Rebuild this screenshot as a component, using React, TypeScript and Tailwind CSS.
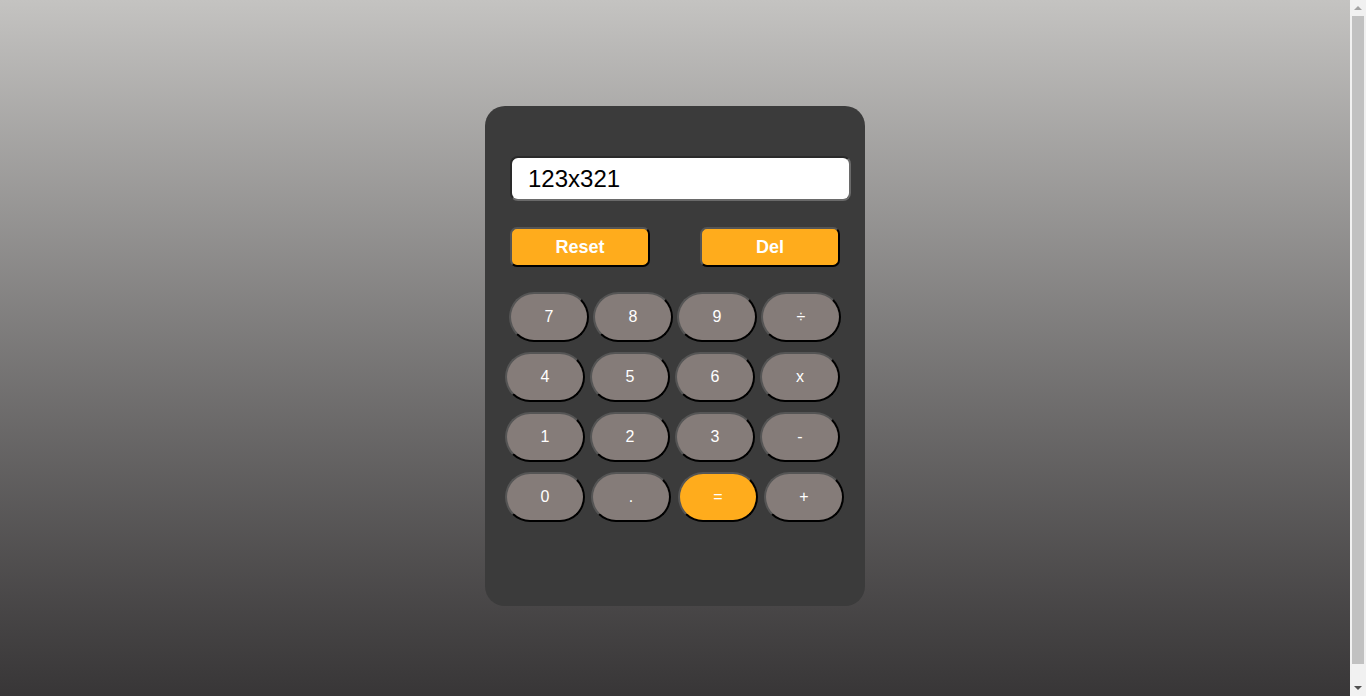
const rows: { keys: string[]; className: string; gaps: string[] }[] = [
  { keys: ["7", "8", "9", "÷"], className: "pl-[24px]", gaps: ["", "ml-[4px]", "ml-[4px]", "ml-[4px]"] },
  { keys: ["4", "5", "6", "x"], className: "pl-[20px]", gaps: ["", "ml-[5px]", "ml-[5px]", "ml-[5px]"] },
  { keys: ["1", "2", "3", "-"], className: "pl-[20px]", gaps: ["", "ml-[5px]", "ml-[5px]", "ml-[5px]"] },
  { keys: ["0", ".", "=", "+"], className: "pl-[20px]", gaps: ["", "ml-[6px]", "ml-[7px]", "ml-[6px]"] },
];

const App = () => {
  return (
    <div className="flex h-screen w-full overflow-hidden" style={{ fontFamily: '"Liberation Sans", Arial, sans-serif' }}>
      <main className="h-full flex-1 bg-gradient-to-b from-[#c4c3c1] to-[#383637] pt-[106px]">
        <div className="mx-auto h-[500px] w-[380px] rounded-[20px] bg-[#3b3b3b] pt-[50px]">
          <div className="ml-[25px] flex h-[45px] w-[341px] items-center rounded-[8px] border-2 border-t-[#2a2a2a] border-l-[#2a2a2a] border-b-[#6a6a6a] border-r-[#6a6a6a] bg-white pl-[16px] text-[24px] text-black">
            123x321
          </div>

          <div className="mt-[26px] flex pl-[25px]">
            <button className="h-[40px] w-[140px] rounded-[7px] border-2 border-t-[#555] border-l-[#555] border-b-black border-r-black bg-[#ffac1c] text-[18px] font-bold text-white">
              Reset
            </button>
            <button className="ml-[50px] h-[40px] w-[140px] rounded-[7px] border-2 border-t-[#555] border-l-[#555] border-b-black border-r-black bg-[#ffac1c] text-[18px] font-bold text-white">
              Del
            </button>
          </div>

          <div className="mt-[25px] flex flex-col gap-[10px]">
            {rows.map((row, i) => (
              <div key={i} className={`flex ${row.className}`}>
                {row.keys.map((k, j) => (
                  <button
                    key={k}
                    className={`${row.gaps[j]} h-[50px] w-[80px] rounded-full border-2 border-t-[#555] border-l-[#555] border-b-black border-r-black text-[16px] text-white ${
                      k === "=" ? "bg-[#ffac1c]" : "bg-[#857c79]"
                    }`}
                  >
                    {k}
                  </button>
                ))}
              </div>
            ))}
          </div>
        </div>
      </main>

      {/* page scrollbar */}
      <aside className="flex h-full w-[16px] flex-col items-center bg-[#f1f1f1]">
        <div className="flex h-[16px] w-full items-center justify-center">
          <div className="h-0 w-0 border-x-[4px] border-b-[4px] border-x-transparent border-b-[#a3a3a3]" />
        </div>
        <div className="h-[648px] w-[12px] bg-[#c1c1c1]" />
        <div className="flex-1" />
        <div className="flex h-[16px] w-full items-center justify-center">
          <div className="h-0 w-0 border-x-[4px] border-t-[4px] border-x-transparent border-t-[#505050]" />
        </div>
      </aside>
    </div>
  );
};

export default App;
